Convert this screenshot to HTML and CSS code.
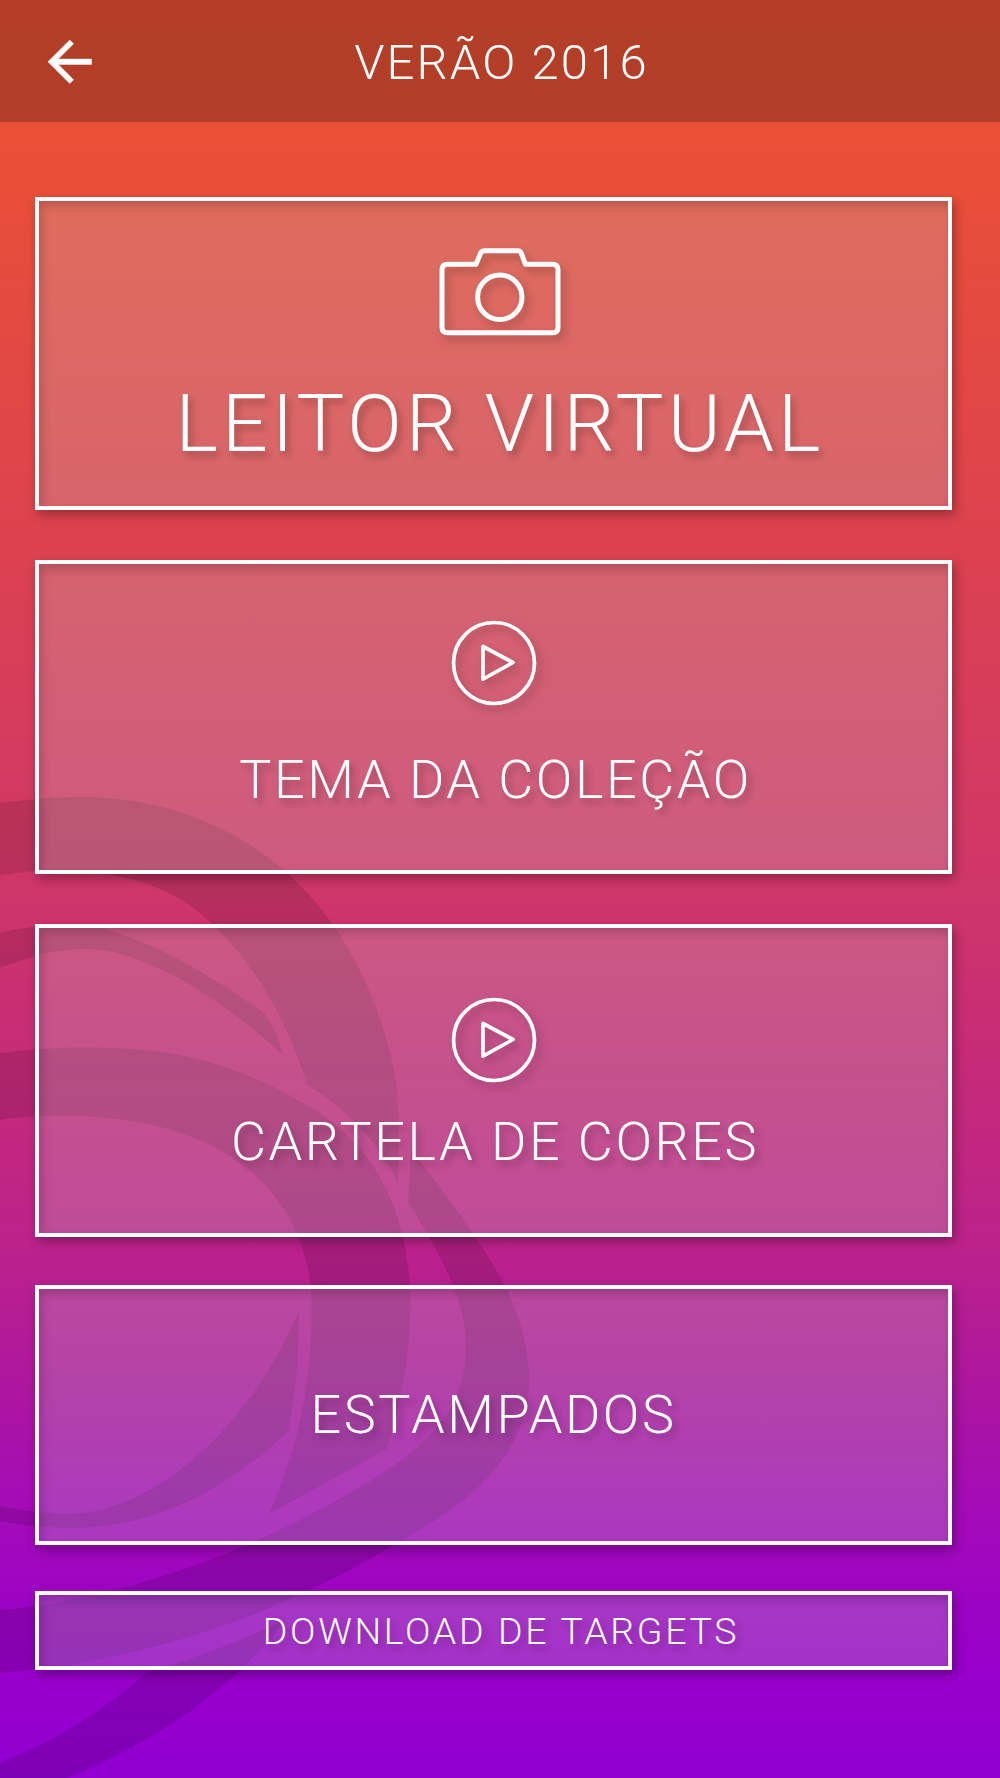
FILE: index.html
```html
<!DOCTYPE html>
<html lang="pt-BR">
<head>
<meta charset="utf-8">
<title>Verão 2016</title>
<link rel="stylesheet" href="styles.css">
</head>
<body>
<svg class="swirl" viewBox="0 0 1000 1778" aria-hidden="true">
  <path d="M0 803C27 799 54 797 82 797C160 797 230 824 284 870C355 932 385 1020 396 1080C400 1120 399 1150 398 1183C385 1152 350 1110 307 1085C290 1030 270 995 250 968C236 948 226 936 211 923C180 893 145 880 104 874C70 868 35 870 0 875Z"/>
  <path d="M0 933C24 927 60 922 100 928C155 942 215 978 264 1013C274 1026 279 1040 283 1055C230 1007 150 949 86 949C55 949 28 957 0 968Z"/>
  <path d="M0 1053C50 1047 95 1046 143 1050C200 1055 250 1072 307 1105C370 1142 404 1200 410 1285C412 1340 404 1395 387 1449L269 1514C300 1445 315 1370 311 1290C300 1180 210 1117 70 1116C45 1115 20 1117 0 1120Z"/>
  <path d="M0 1506C30 1512 50 1514 71 1513.5C150 1513 250 1430 299 1310C299 1355 296 1395 287.500 1432C220 1495 150 1528 71 1528C45 1528 20 1525 0 1521Z"/>
  <path d="M411 1150C430 1172 452 1203 477 1240C512 1290 529 1335 529 1380C529 1450 475 1500 407 1537C345 1575 200 1658 0 1673V1610C80 1603 165 1580 246 1545C300 1522 350 1495 393 1466C450 1425 466 1395 466 1340C464 1300 445 1262 408 1202Z"/>
  <path d="M285 1620C240 1680 170 1735 68 1778H0V1763C55 1741 105 1710 146 1673C190 1660 240 1642 285 1620Z"/>
</svg>
<header class="topbar">
  <a class="back" href="#" aria-label="Voltar"><svg viewBox="0 0 24 24"><path d="M20 11H7.830l5.590-5.590L12 4l-8 8 8 8 1.410-1.410L7.830 13H20v-2z"/></svg></a>
  <h1 class="title">VERÃO 2016</h1>
</header>
<main class="menu">
  <a class="card card-reader" href="#">
    <svg class="icon camera" viewBox="0 0 126 92"><path d="M10.500 19.300H39L43.500 8.200Q44.700 5.700 47.500 5.700H80.500Q83.300 5.700 84.300 8.200L88.500 19.300H115.500Q121 19.300 121 24.800V82.200Q121 87.700 115.500 87.700H10.500Q5 87.700 5 82.200V24.800Q5 19.300 10.500 19.300Z"/><circle cx="62.800" cy="52.300" r="22.200"/></svg>
    <span class="label">LEITOR VIRTUAL</span>
  </a>
  <a class="card card-theme" href="#">
    <svg class="icon play" viewBox="0 0 86 86"><circle cx="43" cy="43" r="40.500"/><path d="M32 26.500V59.200L62 42.500Z"/></svg>
    <span class="label">TEMA DA COLEÇÃO</span>
  </a>
  <a class="card card-colors" href="#">
    <svg class="icon play" viewBox="0 0 86 86"><circle cx="43" cy="43" r="40.500"/><path d="M32 26.500V59.200L62 42.500Z"/></svg>
    <span class="label">CARTELA DE CORES</span>
  </a>
  <a class="card card-prints" href="#"><span class="label">ESTAMPADOS</span></a>
  <a class="card card-download" href="#"><span class="label">DOWNLOAD DE TARGETS</span></a>
</main>
</body>
</html>
```
FILE: styles.css
```css
* { box-sizing: border-box; }

body {
  position: relative;
  margin: 0;
  height: 1778px;
  overflow: hidden;
  font-family: Roboto, sans-serif;
  font-weight: 300;
  color: #fff;
  background: linear-gradient(#ec5234 0, #eb5136 122px, #e84e39 200px, #dd434c 510px, #cf3669 890px, #c92e72 1000px, #bc228a 1245px, #ad169f 1390px, #a40bb8 1510px, #9d05c2 1590px, #9800cc 1680px, #9000d0 1778px);
}

.swirl {
  position: absolute;
  inset: 0;
  width: 1000px;
  height: 1778px;
  fill: rgba(0, 0, 0, .12);
}

.topbar {
  position: relative;
  display: grid;
  grid-template-columns: 1fr auto 1fr;
  align-items: center;
  height: 121.500px;
  padding: 0 36.500px;
  background: rgba(0, 0, 0, .235);
}

.back, .back svg { display: block; width: 65.500px; height: 65.500px; }
.back { margin-top: 1px; }
.back svg { fill: #fff; stroke: #fff; stroke-width: .15px; }

.title {
  margin: 4px 0 0 3px;
  font-size: 49px;
  font-weight: 300;
  line-height: 60px;
  letter-spacing: 2.100px;
}

.menu {
  position: relative;
  display: flex;
  flex-direction: column;
  width: 917.500px;
  margin: 75px 0 0 34.800px;
}

.card {
  display: flex;
  flex-direction: column;
  align-items: center;
  height: 313.500px;
  margin-bottom: 50px;
  border: 4px solid #fff;
  color: inherit;
  text-decoration: none;
  background: rgba(198, 200, 200, .25);
  box-shadow: 3px 5px 10px rgba(0, 0, 0, .3), inset 3px 5px 10px rgba(0, 0, 0, .18);
}

.icon {
  flex: none;
  fill: none;
  stroke: #fff;
  stroke-linejoin: round;
  overflow: visible;
  filter: drop-shadow(4px 5px 4px rgba(0, 0, 0, .22));
}
.camera { width: 126px; height: 92px; stroke-width: 5px; }
.play { width: 86px; height: 86px; stroke-width: 3.700px; }

.label {
  font-size: 54px;
  line-height: 64px;
  letter-spacing: 2.520px;
  white-space: nowrap;
  text-shadow: 4px 5px 7px rgba(0, 0, 0, .24);
}

.card-reader { padding: 44px 0 0 13px; }
.card-reader .label { margin-top: 40px; font-size: 80.500px; line-height: 94px; letter-spacing: 4px; }
.card-theme { padding-top: 56px; }
.card-theme .label { margin: 42px 0 0 4px; }
.card-colors { padding-top: 69px; margin-bottom: 48px; }
.card-colors .label { margin: 27px 0 0 3px; }
.card-prints { height: 259.500px; margin-bottom: 46px; padding-top: 94px; }
.card-download { height: 79px; margin: 0; padding: 14px 0 0 15px; }
.card-download .label { font-size: 37.500px; line-height: 44px; letter-spacing: 2.700px; }
```
